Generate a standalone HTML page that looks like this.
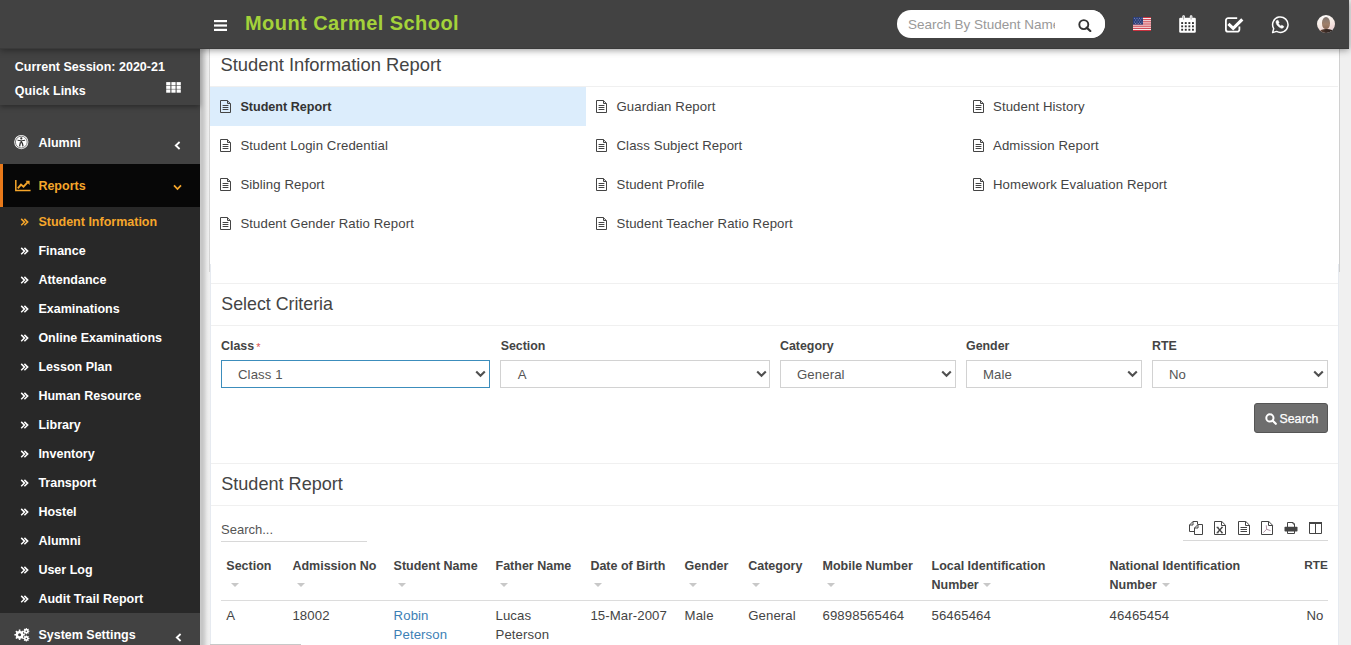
<!DOCTYPE html>
<html><head><meta charset="utf-8">
<style>
*{box-sizing:border-box;margin:0;padding:0}
html,body{width:1351px;height:645px;overflow:hidden;background:#f0f0f0;font-family:"Liberation Sans",sans-serif;color:#444}
body{position:relative}
.a{position:absolute}
.t{position:absolute;white-space:nowrap;line-height:1}
.b{font-weight:bold;font-size:12.5px}
.sw{color:#fff}
.r{font-size:13.2px;letter-spacing:0.1px}
.doc{position:absolute;width:12px;height:13px}
.sel{position:absolute;top:360px;height:28px;border:1px solid #d2d2d2;background:#fff}
.chev{position:absolute;top:370px}
.caret{position:absolute;width:0;height:0;border-left:4.5px solid transparent;border-right:4.5px solid transparent;border-top:4.5px solid #c8c8c8}
</style></head>
<body>
<!-- content boxes -->
<div class="a" style="left:210px;top:48px;width:1129px;height:597px;background:#fff"></div>
<div class="a" style="left:209px;top:48px;width:1px;height:224px;background:#d4d4d4"></div>
<div class="a" style="left:1339px;top:48px;width:1px;height:224px;background:#d0d0d0"></div><div class="a" style="left:1338px;top:48px;width:1px;height:216px;background:#fff"></div>
<div class="a" style="left:210px;top:264px;width:1px;height:381px;background:#e6eaf0"></div>
<div class="a" style="left:1338px;top:264px;width:1px;height:381px;background:#e6eaf0"></div>
<div class="a" style="left:210px;top:86px;width:1128px;height:1px;background:#f0f0f0"></div>
<div class="a" style="left:210px;top:87px;width:376px;height:39px;background:#dcedfc"></div>
<div class="a" style="left:211px;top:283px;width:1127px;height:1px;background:#f0f0f0"></div>
<div class="a" style="left:211px;top:325px;width:1127px;height:1px;background:#f0f0f0"></div>
<div class="a" style="left:211px;top:463px;width:1127px;height:1px;background:#f0f0f0"></div>
<div class="a" style="left:211px;top:505px;width:1127px;height:1px;background:#f0f0f0"></div>
<!-- header shadow on content -->
<!-- sidebar shadow -->
<div class="a" style="left:200px;top:48px;width:10px;height:597px;background:linear-gradient(90deg,rgba(0,0,0,.15) 0px,rgba(0,0,0,.185) 2px,rgba(0,0,0,.12) 4.5px,rgba(0,0,0,.05) 6.5px,rgba(0,0,0,.01) 8px,rgba(0,0,0,0) 10px)"></div>

<!-- report list -->
<div class="t" style="left:220.4px;top:56px;font-size:18.4px;color:#444">Student Information Report</div>
<div class="t b" style="left:240.4px;top:101px;font-size:12.6px;color:#333">Student Report</div>
<div class="t r" style="left:240.4px;top:139.3px">Student Login Credential</div>
<div class="t r" style="left:240.4px;top:178.3px">Sibling Report</div>
<div class="t r" style="left:240.4px;top:217.3px">Student Gender Ratio Report</div>
<div class="t r" style="left:616.5px;top:100.3px">Guardian Report</div>
<div class="t r" style="left:616.5px;top:139.3px">Class Subject Report</div>
<div class="t r" style="left:616.5px;top:178.3px">Student Profile</div>
<div class="t r" style="left:616.5px;top:217.3px">Student Teacher Ratio Report</div>
<div class="t r" style="left:993px;top:100.3px">Student History</div>
<div class="t r" style="left:993px;top:139.3px">Admission Report</div>
<div class="t r" style="left:993px;top:178.3px">Homework Evaluation Report</div>


<svg class="a" style="left:220px;top:100px" width="12" height="14" viewBox="0 0 12 14"><path d="M0.5 0.5H7.3L10.5 3.7V12.5H0.5Z" stroke="#444" stroke-width="1" fill="none"/><path d="M7.5 0.5V3.5H10.5" stroke="#444" stroke-width="1" fill="none"/><path d="M2.6 5.5H8.4M2.6 7.5H8.4M2.6 9.5H8.4" stroke="#444" stroke-width="1"/></svg><svg class="a" style="left:220px;top:139px" width="12" height="14" viewBox="0 0 12 14"><path d="M0.5 0.5H7.3L10.5 3.7V12.5H0.5Z" stroke="#444" stroke-width="1" fill="none"/><path d="M7.5 0.5V3.5H10.5" stroke="#444" stroke-width="1" fill="none"/><path d="M2.6 5.5H8.4M2.6 7.5H8.4M2.6 9.5H8.4" stroke="#444" stroke-width="1"/></svg><svg class="a" style="left:220px;top:178px" width="12" height="14" viewBox="0 0 12 14"><path d="M0.5 0.5H7.3L10.5 3.7V12.5H0.5Z" stroke="#444" stroke-width="1" fill="none"/><path d="M7.5 0.5V3.5H10.5" stroke="#444" stroke-width="1" fill="none"/><path d="M2.6 5.5H8.4M2.6 7.5H8.4M2.6 9.5H8.4" stroke="#444" stroke-width="1"/></svg><svg class="a" style="left:220px;top:217px" width="12" height="14" viewBox="0 0 12 14"><path d="M0.5 0.5H7.3L10.5 3.7V12.5H0.5Z" stroke="#444" stroke-width="1" fill="none"/><path d="M7.5 0.5V3.5H10.5" stroke="#444" stroke-width="1" fill="none"/><path d="M2.6 5.5H8.4M2.6 7.5H8.4M2.6 9.5H8.4" stroke="#444" stroke-width="1"/></svg><svg class="a" style="left:596px;top:100px" width="12" height="14" viewBox="0 0 12 14"><path d="M0.5 0.5H7.3L10.5 3.7V12.5H0.5Z" stroke="#444" stroke-width="1" fill="none"/><path d="M7.5 0.5V3.5H10.5" stroke="#444" stroke-width="1" fill="none"/><path d="M2.6 5.5H8.4M2.6 7.5H8.4M2.6 9.5H8.4" stroke="#444" stroke-width="1"/></svg><svg class="a" style="left:596px;top:139px" width="12" height="14" viewBox="0 0 12 14"><path d="M0.5 0.5H7.3L10.5 3.7V12.5H0.5Z" stroke="#444" stroke-width="1" fill="none"/><path d="M7.5 0.5V3.5H10.5" stroke="#444" stroke-width="1" fill="none"/><path d="M2.6 5.5H8.4M2.6 7.5H8.4M2.6 9.5H8.4" stroke="#444" stroke-width="1"/></svg><svg class="a" style="left:596px;top:178px" width="12" height="14" viewBox="0 0 12 14"><path d="M0.5 0.5H7.3L10.5 3.7V12.5H0.5Z" stroke="#444" stroke-width="1" fill="none"/><path d="M7.5 0.5V3.5H10.5" stroke="#444" stroke-width="1" fill="none"/><path d="M2.6 5.5H8.4M2.6 7.5H8.4M2.6 9.5H8.4" stroke="#444" stroke-width="1"/></svg><svg class="a" style="left:596px;top:217px" width="12" height="14" viewBox="0 0 12 14"><path d="M0.5 0.5H7.3L10.5 3.7V12.5H0.5Z" stroke="#444" stroke-width="1" fill="none"/><path d="M7.5 0.5V3.5H10.5" stroke="#444" stroke-width="1" fill="none"/><path d="M2.6 5.5H8.4M2.6 7.5H8.4M2.6 9.5H8.4" stroke="#444" stroke-width="1"/></svg><svg class="a" style="left:973px;top:100px" width="12" height="14" viewBox="0 0 12 14"><path d="M0.5 0.5H7.3L10.5 3.7V12.5H0.5Z" stroke="#444" stroke-width="1" fill="none"/><path d="M7.5 0.5V3.5H10.5" stroke="#444" stroke-width="1" fill="none"/><path d="M2.6 5.5H8.4M2.6 7.5H8.4M2.6 9.5H8.4" stroke="#444" stroke-width="1"/></svg><svg class="a" style="left:973px;top:139px" width="12" height="14" viewBox="0 0 12 14"><path d="M0.5 0.5H7.3L10.5 3.7V12.5H0.5Z" stroke="#444" stroke-width="1" fill="none"/><path d="M7.5 0.5V3.5H10.5" stroke="#444" stroke-width="1" fill="none"/><path d="M2.6 5.5H8.4M2.6 7.5H8.4M2.6 9.5H8.4" stroke="#444" stroke-width="1"/></svg><svg class="a" style="left:973px;top:178px" width="12" height="14" viewBox="0 0 12 14"><path d="M0.5 0.5H7.3L10.5 3.7V12.5H0.5Z" stroke="#444" stroke-width="1" fill="none"/><path d="M7.5 0.5V3.5H10.5" stroke="#444" stroke-width="1" fill="none"/><path d="M2.6 5.5H8.4M2.6 7.5H8.4M2.6 9.5H8.4" stroke="#444" stroke-width="1"/></svg>
<!-- select criteria -->
<div class="t" style="left:221.3px;top:295.6px;font-size:17.8px;color:#444">Select Criteria</div>
<div class="t b" style="left:221px;top:340.2px;font-size:12.4px">Class</div>
<div class="t" style="left:256.3px;top:341.5px;font-size:11px;color:#d9534f">*</div>
<div class="t b" style="left:500.7px;top:340.2px;font-size:12.4px">Section</div>
<div class="t b" style="left:780px;top:340.2px;font-size:12.4px">Category</div>
<div class="t b" style="left:966px;top:340.2px;font-size:12.4px">Gender</div>
<div class="t b" style="left:1152px;top:340.2px;font-size:12.4px">RTE</div>
<div class="sel" style="left:221px;width:269px;border-color:#3c8dbc"></div>
<div class="sel" style="left:500px;width:270px"></div>
<div class="sel" style="left:780px;width:176px"></div>
<div class="sel" style="left:966px;width:176px"></div>
<div class="sel" style="left:1152px;width:176px"></div>
<div class="t r" style="left:238px;top:367.8px;color:#555">Class 1</div>
<div class="t r" style="left:517.8px;top:367.8px;color:#555">A</div>
<div class="t r" style="left:797px;top:367.8px;color:#555">General</div>
<div class="t r" style="left:983px;top:367.8px;color:#555">Male</div>
<div class="t r" style="left:1169px;top:367.8px;color:#555">No</div>
<svg class="chev" style="left:474.5px" width="11" height="8" viewBox="0 0 11 8"><path d="M1.2 1.5 L5.5 5.8 L9.8 1.5" stroke="#505050" stroke-width="2.1" fill="none"/></svg>
<svg class="chev" style="left:755.5px" width="11" height="8" viewBox="0 0 11 8"><path d="M1.2 1.5 L5.5 5.8 L9.8 1.5" stroke="#505050" stroke-width="2.1" fill="none"/></svg>
<svg class="chev" style="left:940.5px" width="11" height="8" viewBox="0 0 11 8"><path d="M1.2 1.5 L5.5 5.8 L9.8 1.5" stroke="#505050" stroke-width="2.1" fill="none"/></svg>
<svg class="chev" style="left:1126.5px" width="11" height="8" viewBox="0 0 11 8"><path d="M1.2 1.5 L5.5 5.8 L9.8 1.5" stroke="#505050" stroke-width="2.1" fill="none"/></svg>
<svg class="chev" style="left:1312.5px" width="11" height="8" viewBox="0 0 11 8"><path d="M1.2 1.5 L5.5 5.8 L9.8 1.5" stroke="#505050" stroke-width="2.1" fill="none"/></svg>
<!-- search button -->
<div class="a" style="left:1254px;top:403px;width:74px;height:30px;background:#6e6e6e;border:1px solid #555;border-radius:3px"></div>
<svg class="a" style="left:1265px;top:413px" width="12" height="12" viewBox="0 0 12 12"><circle cx="4.9" cy="4.9" r="3.6" stroke="#fff" stroke-width="2" fill="none"/><path d="M7.5 7.5 L10.8 10.8" stroke="#fff" stroke-width="2.2" stroke-linecap="round"/></svg>
<div class="t b" style="left:1279.5px;top:412.8px;font-size:12.3px;color:#fff;font-weight:normal;-webkit-text-stroke:0.25px #fff">Search</div>

<!-- student report -->
<div class="t" style="left:221.2px;top:474.6px;font-size:18.1px;color:#444">Student Report</div>
<div class="t" style="left:221px;top:523.3px;font-size:13px;color:#555">Search...</div>
<div class="a" style="left:221px;top:541px;width:146px;height:1px;background:#d8d8d8"></div>
<div class="a" style="left:1183px;top:540px;width:145px;height:1px;background:#d8d8d8"></div>
<svg class="a" style="left:1189px;top:521px" width="15" height="15" viewBox="0 0 15 15"><path d="M5 10.5H0.5V4L4 0.5H8.5V3.5" stroke="#444" stroke-width="1" fill="none"/><path d="M0.5 4H4V0.5" stroke="#444" stroke-width="1" fill="none"/><path d="M5.5 7L9 3.5H13.5V13.5H5.5Z" stroke="#444" stroke-width="1" fill="#fff"/><path d="M5.5 7H9V3.5" stroke="#444" stroke-width="1" fill="none"/></svg>
<svg class="a" style="left:1214px;top:521px" width="13" height="15" viewBox="0 0 13 15"><path d="M0.5 0.5H7.8L11.5 4.2V13.5H0.5Z" stroke="#444" stroke-width="1" fill="none"/><path d="M7.5 0.5V4.5H11.5" stroke="#444" stroke-width="1" fill="none"/><path d="M3.3 6.3L8.2 11.8M8.2 6.3L3.3 11.8" stroke="#444" stroke-width="1.3"/><path d="M2.5 6.3H4.6M7 6.3H9M2.5 11.8H4.6M7 11.8H9" stroke="#444" stroke-width="0.9"/></svg>
<svg class="a" style="left:1238px;top:521px" width="13" height="15" viewBox="0 0 13 15"><path d="M0.5 0.5H7.8L11.5 4.2V13.5H0.5Z" stroke="#444" stroke-width="1" fill="none"/><path d="M7.5 0.5V4.5H11.5" stroke="#444" stroke-width="1" fill="none"/><path d="M2.5 6.5H9M2.5 8.5H9M2.5 10.5H9" stroke="#444" stroke-width="1"/></svg>
<svg class="a" style="left:1261px;top:521px" width="13" height="15" viewBox="0 0 13 15"><path d="M0.5 0.5H7.8L11.5 4.2V13.5H0.5Z" stroke="#444" stroke-width="1" fill="none"/><path d="M7.5 0.5V4.5H11.5" stroke="#444" stroke-width="1" fill="none"/><path d="M5.3 4.3L5.6 8.3L2.3 11.6M5.6 8.3L9.5 9.6" stroke="#a07890" stroke-width="0.8" fill="none"/></svg>
<svg class="a" style="left:1284px;top:522px" width="14" height="12" viewBox="0 0 14 12"><path d="M3.5 5V0.5H9L10.5 2V5" stroke="#444" stroke-width="1" fill="none"/><path d="M9 0.5V2H10.5" stroke="#444" stroke-width="1" fill="none"/><rect x="0.5" y="4.8" width="13" height="4.8" rx="0.8" fill="#444"/><path d="M3.5 9V11.5H10.5V9" stroke="#444" stroke-width="1" fill="none"/></svg>
<svg class="a" style="left:1309px;top:522px" width="13" height="12" viewBox="0 0 13 12"><path d="M0.5 1H12.5V11.5H0.5Z" stroke="#444" stroke-width="1" fill="none"/><rect x="0" y="0" width="13" height="2" fill="#444"/><path d="M6.5 1.5V11.2" stroke="#444" stroke-width="1"/></svg>

<!-- table -->
<div class="t b" style="left:226.3px;top:559.7px">Section</div>
<div class="t b" style="left:292.4px;top:559.7px">Admission No</div>
<div class="t b" style="left:393.6px;top:559.7px">Student Name</div>
<div class="t b" style="left:495.5px;top:559.7px">Father Name</div>
<div class="t b" style="left:590.4px;top:559.7px">Date of Birth</div>
<div class="t b" style="left:684.6px;top:559.7px">Gender</div>
<div class="t b" style="left:748.2px;top:559.7px">Category</div>
<div class="t b" style="left:822.5px;top:559.7px">Mobile Number</div>
<div class="t b" style="left:931.5px;top:559.7px">Local Identification</div>
<div class="t b" style="left:931.5px;top:578.9px">Number</div>
<div class="t b" style="left:1109.6px;top:559.7px">National Identification</div>
<div class="t b" style="left:1109.6px;top:578.9px">Number</div>
<div class="t b" style="left:1304.3px;top:559.9px;font-size:11.8px">RTE</div>
<div class="caret" style="left:230.5px;top:583px"></div>
<div class="caret" style="left:296.6px;top:583px"></div>
<div class="caret" style="left:397.6px;top:583px"></div>
<div class="caret" style="left:499.5px;top:583px"></div>
<div class="caret" style="left:594.4px;top:583px"></div>
<div class="caret" style="left:688.6px;top:583px"></div>
<div class="caret" style="left:752.2px;top:583px"></div>
<div class="caret" style="left:826.5px;top:583px"></div>
<div class="caret" style="left:983px;top:583px"></div>
<div class="caret" style="left:1161.5px;top:583px"></div>
<div class="a" style="left:221px;top:600px;width:1107px;height:1px;background:#dcdcdc"></div>
<div class="t r" style="left:226.3px;top:609px">A</div>
<div class="t r" style="left:292.4px;top:609px">18002</div>
<div class="t r" style="left:393.6px;top:609px;color:#3c7fb5">Robin</div>
<div class="t r" style="left:393.6px;top:627.6px;color:#3c7fb5">Peterson</div>
<div class="t r" style="left:495.5px;top:609px">Lucas</div>
<div class="t r" style="left:495.5px;top:627.6px">Peterson</div>
<div class="t r" style="left:590.4px;top:609px">15-Mar-2007</div>
<div class="t r" style="left:684.6px;top:609px">Male</div>
<div class="t r" style="left:748.2px;top:609px">General</div>
<div class="t r" style="left:822.5px;top:609px">69898565464</div>
<div class="t r" style="left:931.5px;top:609px">56465464</div>
<div class="t r" style="left:1109.6px;top:609px">46465454</div>
<div class="t r" style="left:1306.4px;top:609px">No</div>
<div class="a" style="left:210px;top:644px;width:91px;height:1px;background:#c8c8c8"></div>

<!-- header -->
<div class="a" style="left:0;top:0;width:1349px;height:49px;background:#424242;z-index:10;box-shadow:0 1px 7px rgba(0,0,0,.42);border-bottom:1px solid #3a3a3a"></div>
<div id="hdr" style="position:absolute;left:0;top:0;width:1351px;height:48px;z-index:11">
  <svg class="a" style="left:214px;top:20px" width="13" height="11" viewBox="0 0 13 11"><rect x="0" y="0" width="13" height="2.2" fill="#fff"/><rect x="0" y="4.4" width="13" height="2.2" fill="#fff"/><rect x="0" y="8.8" width="13" height="2.2" fill="#fff"/></svg>
  <div class="t" style="left:245px;top:13px;font-size:20px;font-weight:bold;letter-spacing:0.45px;color:#a4d23a">Mount Carmel School</div>
  <div class="a" style="left:897px;top:10px;width:208px;height:28px;background:#fff;border-radius:14px;overflow:hidden">
    <div class="t" style="left:11px;top:7.5px;font-size:13.5px;color:#999">Search By Student Name</div>
    <div class="a" style="left:158px;top:0;width:50px;height:28px;background:#fff"></div>
  </div>
  <svg class="a" style="left:1078px;top:18.5px" width="14" height="13" viewBox="0 0 14 13"><circle cx="5.8" cy="5.6" r="4.5" stroke="#333" stroke-width="1.9" fill="none"/><path d="M8.7 8.6L12.3 12" stroke="#333" stroke-width="2.2" stroke-linecap="round"/></svg>
  <svg class="a" style="left:1133px;top:17px" width="18" height="14" viewBox="0 0 18 14"><rect width="18" height="14" fill="#fff"/><g fill="#c8313e"><rect y="0" width="18" height="1.1"/><rect y="2.15" width="18" height="1.1"/><rect y="4.3" width="18" height="1.1"/><rect y="6.45" width="18" height="1.1"/><rect y="8.6" width="18" height="1.1"/><rect y="10.75" width="18" height="1.1"/><rect y="12.9" width="18" height="1.1"/></g><rect width="10" height="7.6" fill="#2b3d78"/><g fill="#9aa3c4"><circle cx="1.5" cy="1.3" r=".5"/><circle cx="4" cy="1.3" r=".5"/><circle cx="6.5" cy="1.3" r=".5"/><circle cx="9" cy="1.3" r=".5"/><circle cx="2.7" cy="3.1" r=".5"/><circle cx="5.2" cy="3.1" r=".5"/><circle cx="7.7" cy="3.1" r=".5"/><circle cx="1.5" cy="4.9" r=".5"/><circle cx="4" cy="4.9" r=".5"/><circle cx="6.5" cy="4.9" r=".5"/><circle cx="9" cy="4.9" r=".5"/><circle cx="2.7" cy="6.6" r=".5"/><circle cx="5.2" cy="6.6" r=".5"/><circle cx="7.7" cy="6.6" r=".5"/></g></svg>
  <svg class="a" style="left:1179px;top:15px" width="17" height="18" viewBox="0 0 17 18"><rect x="0.2" y="2.8" width="16.6" height="15" rx="1.3" fill="#fff"/><rect x="3.3" y="0.2" width="2.6" height="5" rx="1.2" fill="#fff"/><rect x="10.8" y="0.2" width="2.6" height="5" rx="1.2" fill="#fff"/><path d="M4.6 1.2V4.6M12.1 1.2V4.6" stroke="#777" stroke-width="0.6"/><g fill="#333"><rect x="2.2" y="7.1" width="1.9" height="1.9"/><rect x="5.8" y="7.1" width="1.9" height="1.9"/><rect x="9.4" y="7.1" width="1.9" height="1.9"/><rect x="13" y="7.1" width="1.9" height="1.9"/><rect x="2.2" y="10.4" width="1.9" height="1.9"/><rect x="5.8" y="10.4" width="1.9" height="1.9"/><rect x="9.4" y="10.4" width="1.9" height="1.9"/><rect x="13" y="10.4" width="1.9" height="1.9"/><rect x="2.2" y="13.8" width="1.9" height="1.9"/><rect x="5.8" y="13.8" width="1.9" height="1.9"/><rect x="9.4" y="13.8" width="1.9" height="1.9"/><rect x="13" y="13.8" width="1.9" height="1.9"/></g></svg>
    <svg class="a" style="left:1225px;top:16.5px" width="19" height="16" viewBox="0 0 19 16"><path d="M12.2 1.2H3.2A2.3 2.3 0 0 0 0.9 3.5V12.4A2.3 2.3 0 0 0 3.2 14.7H12.1A2.3 2.3 0 0 0 14.4 12.4V9.6" stroke="#fff" stroke-width="1.8" fill="none"/><path d="M3.4 6.8L8.2 11.3L17.3 2.3" stroke="#fff" stroke-width="3.1" fill="none"/></svg>
  <svg class="a" style="left:1271px;top:16px" width="18" height="18" viewBox="0 0 18 18"><path d="M1.6 16.6L2.7 12.6A7.7 7.7 0 1 1 5.6 15.4Z" stroke="#fff" stroke-width="1.5" fill="none" stroke-linejoin="round"/><path d="M6.2 4.3C5.3 4.6 4.8 5.6 5 6.6C5.4 8.9 7.5 11.2 9.9 12C11 12.4 12 12.1 12.6 11.3L12.7 10.3L10.8 9.2L9.8 10C8.8 9.5 7.9 8.6 7.4 7.6L8.1 6.6L7.2 4.5Z" fill="#fff" stroke="#fff" stroke-width="0.5"/></svg>
  <div class="a" style="left:1316.6px;top:14.8px;width:18.5px;height:18.5px;border-radius:50%;overflow:hidden;background:linear-gradient(160deg,#ffffff 0%,#f7ece6 45%,#efd6d6 75%,#cfe0ee 100%)">
    <div class="a" style="left:5.2px;top:2.2px;width:8.4px;height:12px;border-radius:48% 48% 45% 45%;background:linear-gradient(#7d7470 0%,#8f7a6e 30%,#9f7f6a 60%,#8a6a58 100%)"></div>
    <div class="a" style="left:3.5px;top:14.2px;width:13px;height:6px;border-radius:45% 45% 0 0;background:linear-gradient(90deg,#6a4a38 0%,#3a2a24 40%,#2a201c 100%)"></div>
  </div>
</div>

<!-- sidebar -->
<div class="a" style="left:0;top:48px;width:200px;height:597px;background:#282828;z-index:8"></div>
<div class="a" style="left:0;top:48px;width:200px;height:57px;background:#424242;z-index:9;box-shadow:0 2px 5px rgba(0,0,0,.35)"></div>
<div class="a" style="left:0;top:105px;width:200px;height:59px;background:#424242;z-index:8"></div>
<div class="a" style="left:0;top:164px;width:200px;height:43px;background:#070707;z-index:8"></div>
<div class="a" style="left:0;top:164px;width:3px;height:43px;background:#e8791a;z-index:9"></div>
<div class="a" style="left:0;top:613px;width:200px;height:32px;background:#424242;z-index:8"></div>
<div id="sb" style="position:absolute;left:0;top:0;width:200px;height:645px;z-index:12">
  <svg class="a" style="left:166px;top:81.5px" width="15" height="11" viewBox="0 0 15 11"><g fill="#fff"><rect x="0.2" y="0.1" width="4.2" height="3.2"/><rect x="5.4" y="0.1" width="4.2" height="3.2"/><rect x="10.6" y="0.1" width="4.2" height="3.2"/><rect x="0.2" y="3.8" width="4.2" height="3.1"/><rect x="5.4" y="3.8" width="4.2" height="3.1"/><rect x="10.6" y="3.8" width="4.2" height="3.1"/><rect x="0.2" y="7.4" width="4.2" height="3.3"/><rect x="5.4" y="7.4" width="4.2" height="3.3"/><rect x="10.6" y="7.4" width="4.2" height="3.3"/></g></svg>
  <svg class="a" style="left:14.3px;top:135.3px" width="15" height="15" viewBox="0 0 15 15"><circle cx="7.3" cy="7.1" r="7.1" fill="#fff"/><circle cx="7.3" cy="7.1" r="5.9" stroke="#424242" stroke-width="0.7" fill="none"/><circle cx="7.3" cy="3.4" r="1.1" fill="#333"/><path d="M3.5 5.2L7.3 5.9L11.1 5.2" stroke="#333" stroke-width="1" fill="none"/><path d="M7.3 5.8V8.3M6.4 7.3L5.6 11.3M8.2 7.3L9 11.3" stroke="#333" stroke-width="1.3" fill="none"/></svg>
  <svg class="a" style="left:174px;top:140.8px" width="7" height="9" viewBox="0 0 7 9"><path d="M5.6 1L1.8 4.5L5.6 8" stroke="#fff" stroke-width="1.8" fill="none"/></svg>
  <svg class="a" style="left:14.5px;top:179.8px" width="16" height="12" viewBox="0 0 16 12"><path d="M0.8 0V10.6H15.6" stroke="#f5a62b" stroke-width="1.5" fill="none"/><path d="M2.8 8.4L6 4.6L8.5 6.7L12.6 2.4" stroke="#f5a62b" stroke-width="1.9" fill="none"/><path d="M10.5 0.8H14.6V4.9Z" fill="#f5a62b"/></svg>
  <svg class="a" style="left:173.2px;top:184px" width="9" height="7" viewBox="0 0 9 7"><path d="M1 1.3L4.5 5L8 1.3" stroke="#f5a62b" stroke-width="1.7" fill="none"/></svg>
  <svg class="a" style="left:174.5px;top:633px" width="7" height="9" viewBox="0 0 7 9"><path d="M5.6 1L1.8 4.5L5.6 8" stroke="#fff" stroke-width="1.8" fill="none"/></svg>
  <svg class="a" style="left:14px;top:627.5px" width="17" height="14" viewBox="0 0 17 14"><g fill="#fff"><circle cx="5.6" cy="6.8" r="3.9"/><circle cx="12.3" cy="3.2" r="2.4"/><circle cx="12.3" cy="10.5" r="2.4"/></g><g stroke="#fff" stroke-width="1.6"><path d="M5.6 1.6V12M0.4 6.8H10.8M1.9 3.1L9.3 10.5M9.3 3.1L1.9 10.5"/><path d="M12.3 0.1V6.3M9.2 3.2H15.4M10.1 1L14.5 5.4M14.5 1L10.1 5.4" stroke-width="1.1"/><path d="M12.3 7.4V13.6M9.2 10.5H15.4M10.1 8.3L14.5 12.7M14.5 8.3L10.1 12.7" stroke-width="1.1"/></g><circle cx="5.6" cy="6.8" r="1.5" fill="#424242"/><circle cx="12.3" cy="3.2" r="0.8" fill="#424242"/><circle cx="12.3" cy="10.5" r="0.8" fill="#424242"/></svg>
  <svg class="a" style="left:19.9px;top:217.8px" width="10" height="9" viewBox="0 0 10 9"><path d="M1.2 0.9L4.5 4.1L1.2 7.3M4.4 0.9L7.7 4.1L4.4 7.3" stroke="#f5a62b" stroke-width="1.5" fill="none"/></svg>
  <svg class="a" style="left:19.9px;top:246.8px" width="10" height="9" viewBox="0 0 10 9"><path d="M1.2 0.9L4.5 4.1L1.2 7.3M4.4 0.9L7.7 4.1L4.4 7.3" stroke="#fff" stroke-width="1.5" fill="none"/></svg>
  <svg class="a" style="left:19.9px;top:275.8px" width="10" height="9" viewBox="0 0 10 9"><path d="M1.2 0.9L4.5 4.1L1.2 7.3M4.4 0.9L7.7 4.1L4.4 7.3" stroke="#fff" stroke-width="1.5" fill="none"/></svg>
  <svg class="a" style="left:19.9px;top:304.8px" width="10" height="9" viewBox="0 0 10 9"><path d="M1.2 0.9L4.5 4.1L1.2 7.3M4.4 0.9L7.7 4.1L4.4 7.3" stroke="#fff" stroke-width="1.5" fill="none"/></svg>
  <svg class="a" style="left:19.9px;top:333.8px" width="10" height="9" viewBox="0 0 10 9"><path d="M1.2 0.9L4.5 4.1L1.2 7.3M4.4 0.9L7.7 4.1L4.4 7.3" stroke="#fff" stroke-width="1.5" fill="none"/></svg>
  <svg class="a" style="left:19.9px;top:362.8px" width="10" height="9" viewBox="0 0 10 9"><path d="M1.2 0.9L4.5 4.1L1.2 7.3M4.4 0.9L7.7 4.1L4.4 7.3" stroke="#fff" stroke-width="1.5" fill="none"/></svg>
  <svg class="a" style="left:19.9px;top:391.8px" width="10" height="9" viewBox="0 0 10 9"><path d="M1.2 0.9L4.5 4.1L1.2 7.3M4.4 0.9L7.7 4.1L4.4 7.3" stroke="#fff" stroke-width="1.5" fill="none"/></svg>
  <svg class="a" style="left:19.9px;top:420.8px" width="10" height="9" viewBox="0 0 10 9"><path d="M1.2 0.9L4.5 4.1L1.2 7.3M4.4 0.9L7.7 4.1L4.4 7.3" stroke="#fff" stroke-width="1.5" fill="none"/></svg>
  <svg class="a" style="left:19.9px;top:449.8px" width="10" height="9" viewBox="0 0 10 9"><path d="M1.2 0.9L4.5 4.1L1.2 7.3M4.4 0.9L7.7 4.1L4.4 7.3" stroke="#fff" stroke-width="1.5" fill="none"/></svg>
  <svg class="a" style="left:19.9px;top:478.8px" width="10" height="9" viewBox="0 0 10 9"><path d="M1.2 0.9L4.5 4.1L1.2 7.3M4.4 0.9L7.7 4.1L4.4 7.3" stroke="#fff" stroke-width="1.5" fill="none"/></svg>
  <svg class="a" style="left:19.9px;top:507.8px" width="10" height="9" viewBox="0 0 10 9"><path d="M1.2 0.9L4.5 4.1L1.2 7.3M4.4 0.9L7.7 4.1L4.4 7.3" stroke="#fff" stroke-width="1.5" fill="none"/></svg>
  <svg class="a" style="left:19.9px;top:536.8px" width="10" height="9" viewBox="0 0 10 9"><path d="M1.2 0.9L4.5 4.1L1.2 7.3M4.4 0.9L7.7 4.1L4.4 7.3" stroke="#fff" stroke-width="1.5" fill="none"/></svg>
  <svg class="a" style="left:19.9px;top:565.8px" width="10" height="9" viewBox="0 0 10 9"><path d="M1.2 0.9L4.5 4.1L1.2 7.3M4.4 0.9L7.7 4.1L4.4 7.3" stroke="#fff" stroke-width="1.5" fill="none"/></svg>
  <svg class="a" style="left:19.9px;top:594.8px" width="10" height="9" viewBox="0 0 10 9"><path d="M1.2 0.9L4.5 4.1L1.2 7.3M4.4 0.9L7.7 4.1L4.4 7.3" stroke="#fff" stroke-width="1.5" fill="none"/></svg>
  <div class="t b sw" style="left:14.8px;top:60.8px">Current Session: 2020-21</div>
  <div class="t b sw" style="left:14.8px;top:84.5px">Quick Links</div>
  <div class="t b sw" style="left:38.4px;top:136.6px">Alumni</div>
  <div class="t b" style="left:38.4px;top:179.5px;color:#f5a62b">Reports</div>
  <div class="t b" style="left:38.4px;top:216px;color:#f5a62b">Student Information</div>
  <div class="t b sw" style="left:38.4px;top:245.0px">Finance</div>
  <div class="t b sw" style="left:38.4px;top:274.0px">Attendance</div>
  <div class="t b sw" style="left:38.4px;top:303.0px">Examinations</div>
  <div class="t b sw" style="left:38.4px;top:332.0px">Online Examinations</div>
  <div class="t b sw" style="left:38.4px;top:361.0px">Lesson Plan</div>
  <div class="t b sw" style="left:38.4px;top:390.0px">Human Resource</div>
  <div class="t b sw" style="left:38.4px;top:419.0px">Library</div>
  <div class="t b sw" style="left:38.4px;top:448.0px">Inventory</div>
  <div class="t b sw" style="left:38.4px;top:477.0px">Transport</div>
  <div class="t b sw" style="left:38.4px;top:506.0px">Hostel</div>
  <div class="t b sw" style="left:38.4px;top:535.0px">Alumni</div>
  <div class="t b sw" style="left:38.4px;top:564.0px">User Log</div>
  <div class="t b sw" style="left:38.4px;top:593.0px">Audit Trail Report</div>
  <div class="t b sw" style="left:38.4px;top:628.6px">System Settings</div>
</div>
</body></html>
